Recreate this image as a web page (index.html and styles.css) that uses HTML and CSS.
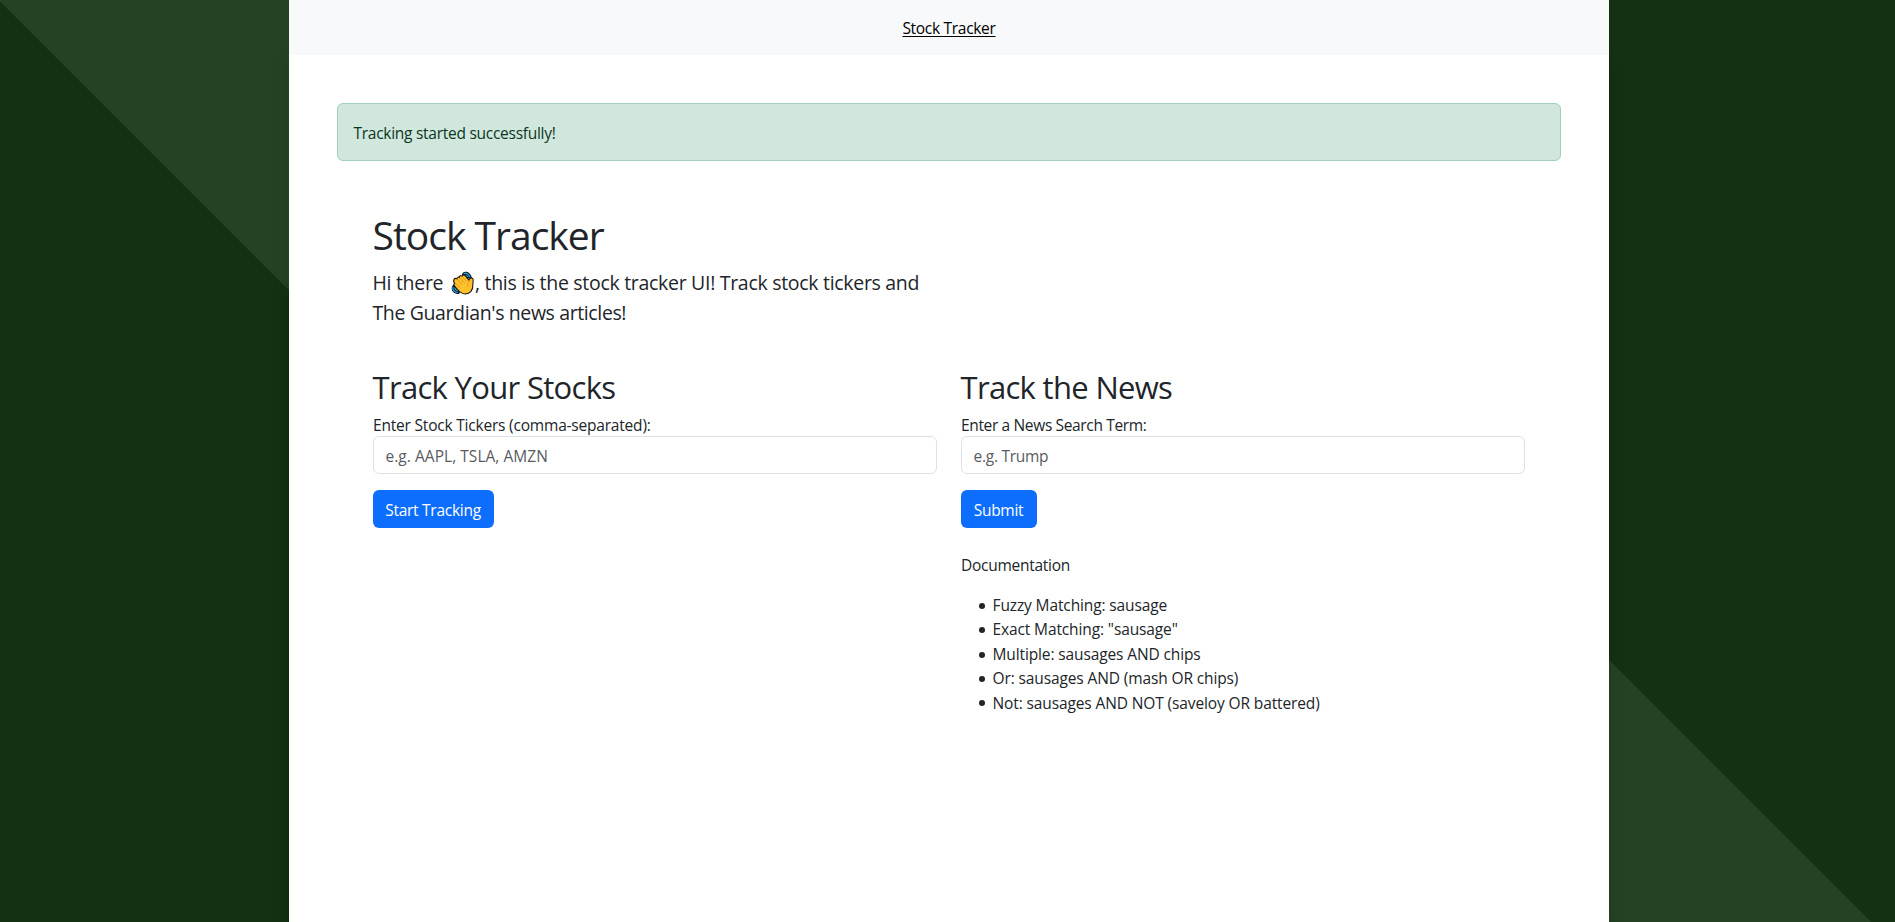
FILE: index.html
```html
<!DOCTYPE html>
<html lang="en">
<head>
<meta charset="utf-8">
<title>Stock Tracker</title>
<link rel="stylesheet" href="styles.css">
</head>
<body>
<div class="page">
  <nav class="navbar"><a class="nav-link" href="#">Stock Tracker</a></nav>
  <main class="main">
    <div class="alert">Tracking started successfully!</div>
    <div class="content">
      <header class="intro">
        <h1 class="title">Stock Tracker</h1>
        <p class="lead"><span class="lead-first">Hi there <svg class="wave" viewBox="0 0 22 23" aria-hidden="true">
          <path d="M10.500 3.500C11-.2 17.500.3 19 6.500L14 7zM3.500 13C-1 15-.2 21.500 7 21.500L8.500 17z" fill="#0b1620" stroke="#0b1620" stroke-width="1"/>
          <path d="M11.500 2.800c3-1.300 5.300.5 6 3.200M12.500 4.500c1.500-.3 2.500.3 3 1.500M1.300 15.300c-.6 3 1.500 5.200 4.700 5.200M3.300 15.800c0 1.500 1 2.700 2.700 2.900" fill="none" stroke="#26a9e0" stroke-width="1.200"/>
          <path d="M2.600 7.800c.6-1 1.700-.9 2.600-.3-.4-1.200 1-2.200 2.200-1.300C7.400 4.600 9.100 4 10.200 5c.6-1.500 2.200-1.500 3.100-.4l3.400 4.100c.9-2.700 4.400-2.500 4 .2l-.2 3.800c.2 6.500-3.200 9.300-7.400 9.300-3.500 0-5.900-2.500-8-5L2.600 14c-.7-1-.2-1.900.5-2.200-1.200-1.200-1.300-2.700-.5-4z" fill="#ffc22d" stroke="#171410" stroke-width="1"/>
          <path d="M5.200 7.800l5.500 5.500M7.700 6.500l5 5.200M10.300 5.300l4.500 4.700M3.300 11.800l4.700 4.200M16.700 8.900c.4 2.400-2.300 3.400-1.100 6" fill="none" stroke="#d98c1c" stroke-width=".7" stroke-linecap="round"/>
        </svg>, this is the stock tracker UI! Track stock tickers and</span><br><span class="lead-second">The Guardian's news articles!</span></p>
      </header>
      <div class="columns">
        <section class="column">
          <h2 class="heading">Track Your Stocks</h2>
          <form class="form">
            <label class="label label-stocks" for="tickers">Enter Stock Tickers (comma-separated):</label>
            <input class="input input-stocks" id="tickers" type="text" placeholder="e.g. AAPL, TSLA, AMZN">
            <button class="button button-stocks" type="button">Start Tracking</button>
          </form>
        </section>
        <section class="column">
          <h2 class="heading">Track the News</h2>
          <form class="form">
            <label class="label label-news" for="term">Enter a News Search Term:</label>
            <input class="input" id="term" type="text" placeholder="e.g. Trump">
            <button class="button button-news" type="button">Submit</button>
          </form>
          <p class="doc-title">Documentation</p>
          <ul class="doc-list">
            <li>Fuzzy Matching: sausage</li>
            <li>Exact Matching: "sausage"</li>
            <li>Multiple: sausages AND chips</li>
            <li>Or: sausages AND (mash OR chips)</li>
            <li>Not: sausages AND NOT (saveloy OR battered)</li>
          </ul>
        </section>
      </div>
    </div>
  </main>
</div>
</body>
</html>
```
FILE: styles.css
```css
* { box-sizing: border-box; }
body {
  margin: 0;
  height: 922px;
  overflow: hidden;
  font: 400 15.5px/24px "Open Sans", "Noto Sans", sans-serif;
  color: #212529;
  letter-spacing: -0.27px;
  background: linear-gradient(45deg, #143113 32.66%, #254324 32.7%, #254324 66.4%, #143113 66.44%);
}
.page { width: 1320px; height: 922px; margin: 0 auto 0 289px; display: flex; flex-direction: column; }
.navbar { position: relative; z-index: 1; height: 55px; flex: none; display: flex; justify-content: center; align-items: center; background: #f8f9fa; }
.nav-link { color: #000; letter-spacing: -0.3px; text-decoration: underline; text-underline-offset: 2px; }
.main { flex: 1; padding: 48px; background: #fff; box-shadow: 0 8px 16px rgba(0, 0, 0, .15); }
.alert { height: 58px; padding: 17px 16px 0 15.5px; border: 1px solid #a3cfbb; border-radius: 6px; background: #d1e7dd; color: #0a3622; }
.content { padding: 50px 36px 0; }
.title { margin: 0 0 9px -0.5px; font-size: 39px; line-height: 48px; font-weight: 400; letter-spacing: -1px; }
.lead { margin: 0 0 0 -0.5px; font-size: 19.5px; line-height: 30px; letter-spacing: -0.3px; white-space: nowrap; }
.lead-second { letter-spacing: -0.38px; }
.wave { width: 24px; height: 24px; margin: -2px 0 0 3px; vertical-align: -5px; }
.columns { display: grid; grid-template-columns: 564px 564px; gap: 24px; margin-top: 40px; }
.heading { margin: 0 0 7px -0.5px; font-size: 31px; line-height: 38px; font-weight: 400; letter-spacing: -0.68px; }
.form { display: flex; flex-direction: column; align-items: flex-start; }
.label { height: 23px; }
.label-stocks { letter-spacing: -0.2px; }
.label-news { letter-spacing: -0.35px; }
.input { width: 100%; height: 38px; padding: 7px 12px 5px 11.5px; font: inherit; letter-spacing: inherit; border: 1px solid #dee2e6; border-radius: 6px; color: #212529; background: #fff; }
.input-stocks { letter-spacing: 0.04px; }
.input::placeholder { color: #595c5f; opacity: 1; }
.button { height: 38px; margin-top: 16px; padding: 2px 1px 0 0; font: inherit; letter-spacing: inherit; color: #fff; background: #0d6efd; border: 0; border-radius: 6px; }
.button-stocks { width: 121px; }
.button-news { width: 76px; }
.doc-title { margin: 25px 0 16px; }
.doc-list { margin: 0; padding: 0; list-style: none; line-height: 24.4px; letter-spacing: -0.12px; }
.doc-list li { display: flex; align-items: center; }
.doc-list li::before { content: ""; width: 6px; height: 6px; margin: 1px 7.5px 0 18px; border-radius: 50%; background: #212529; }
```
